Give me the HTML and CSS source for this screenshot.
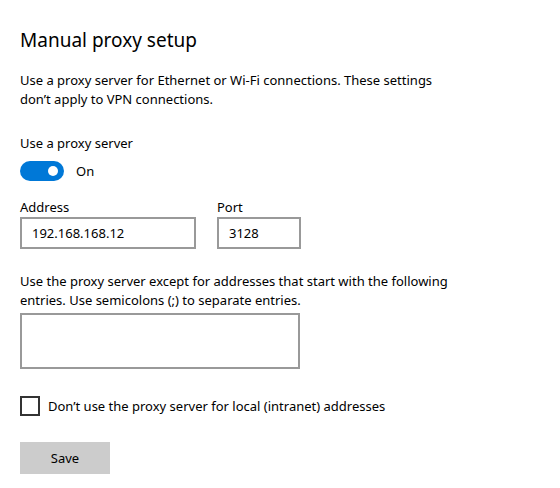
FILE: index.html
```html
<!DOCTYPE html>
<html lang="en">
<head>
<meta charset="utf-8">
<title>Manual proxy setup</title>
<link rel="stylesheet" href="styles.css">
</head>
<body>
<main class="page">
  <h1 class="title">Manual proxy setup</h1>
  <p class="desc">Use a proxy server for Ethernet or Wi-Fi connections. These settings<br>don’t apply to VPN connections.</p>

  <div class="label use-label">Use a proxy server</div>
  <div class="toggle-row">
    <span class="toggle"><span class="knob"></span></span>
    <span class="toggle-text">On</span>
  </div>

  <div class="fields">
    <div class="field">
      <div class="label">Address</div>
      <div class="input input-address">192.168.168.12</div>
    </div>
    <div class="field">
      <div class="label">Port</div>
      <div class="input input-port">3128</div>
    </div>
  </div>

  <p class="desc except">Use the proxy server except for addresses that start with the following<br>entries. Use semicolons (;) to separate entries.</p>
  <div class="input textarea"></div>

  <div class="check-row">
    <span class="checkbox"></span>
    <span class="check-text">Don’t use the proxy server for local (intranet) addresses</span>
  </div>

  <button class="save" type="button">Save</button>
</main>
</body>
</html>
```

FILE: styles.css
```css
html, body {
  margin: 0;
  padding: 0;
  background: #ffffff;
}

body {
  font-family: "Segoe UI", "Noto Sans", "Open Sans", sans-serif;
  font-size: 13px;
  color: #000000;
}

.page {
  padding: 26px 20px 0 20px;
  display: flex;
  flex-direction: column;
  align-items: flex-start;
}

.title {
  margin: 0;
  font-size: 19px;
  font-weight: 400;
  line-height: 28px;
  color: #000000;
}

.desc {
  margin: 17px 0 0 0;
  line-height: 19px;
}

.label {
  line-height: 19px;
}

.use-label {
  margin-top: 25px;
}

.toggle-row {
  display: flex;
  align-items: center;
  gap: 12px;
  margin-top: 8px;
}

.toggle {
  box-sizing: border-box;
  width: 44px;
  height: 20px;
  border-radius: 10px;
  background: #0078d7;
  display: flex;
  align-items: center;
  justify-content: flex-end;
  padding-right: 6px;
}

.knob {
  width: 10px;
  height: 10px;
  border-radius: 50%;
  background: #ffffff;
}

.toggle-text {
  line-height: 20px;
}

.fields {
  display: flex;
  gap: 21px;
  margin-top: 17px;
}

.field {
  display: flex;
  flex-direction: column;
  gap: 0;
}

.input {
  box-sizing: border-box;
  height: 32px;
  border: 2px solid #999999;
  padding: 0 10px;
  display: flex;
  align-items: center;
  background: #ffffff;
}

.input-address {
  width: 176px;
}

.input-port {
  width: 84px;
}

.except {
  margin-top: 23px;
}

.textarea {
  width: 280px;
  height: 56px;
  flex: none;
  margin-top: 3px;
}

.check-row {
  display: flex;
  align-items: center;
  gap: 8px;
  margin-top: 27px;
}

.checkbox {
  box-sizing: border-box;
  width: 20px;
  height: 20px;
  border: 2px solid #333333;
}

.save {
  margin-top: 26px;
  width: 90px;
  height: 32px;
  border: none;
  background: #cccccc;
  font-family: inherit;
  font-size: 13px;
  color: #000000;
  padding: 0;
}
```
